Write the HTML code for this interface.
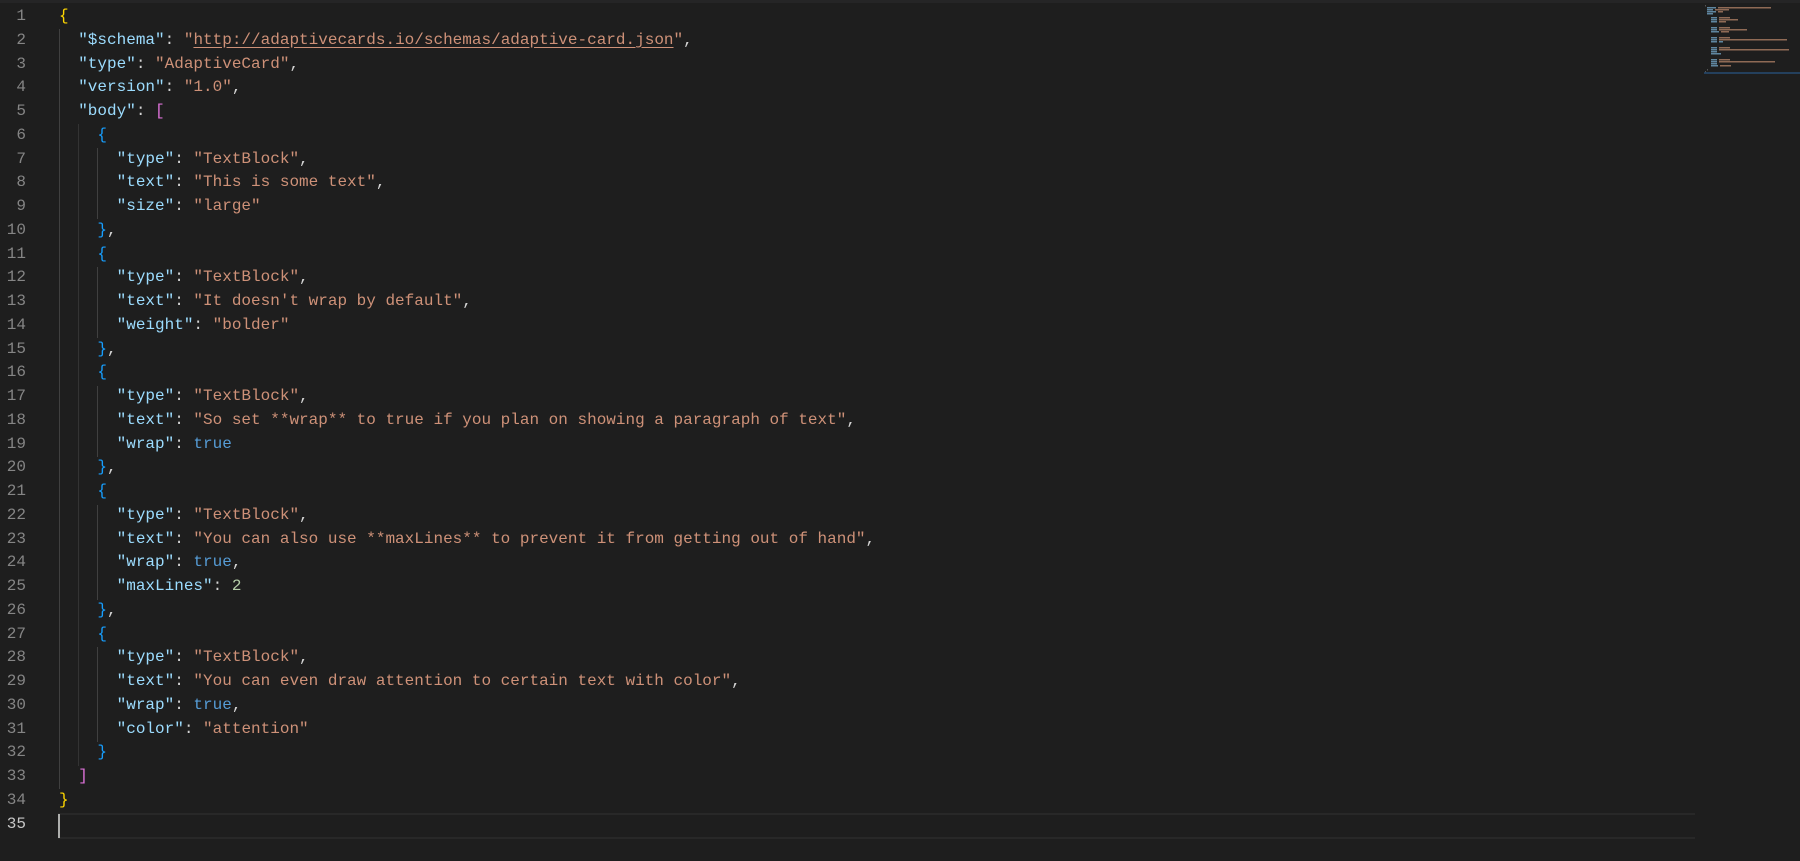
<!DOCTYPE html>
<html><head><meta charset="utf-8"><style>
html,body{margin:0;padding:0;background:#1e1e1e;width:1800px;height:861px;overflow:hidden}
.top{position:absolute;left:0;top:0;width:1800px;height:3px;background:#252526}
.code{position:absolute;left:0;top:5px;font-family:"Liberation Mono",monospace;font-size:16px}
.l{height:23.76px;line-height:23.76px;white-space:pre;position:relative}
.n{position:absolute;left:0;width:26px;text-align:right;color:#858585}
.t{position:absolute;left:59px;color:#d4d4d4}
.k{color:#9cdcfe}.s{color:#ce9178}.b{color:#569cd6}.num{color:#b5cea8}
.y{color:#ffd700}.p{color:#da70d6}.bl{color:#179fff}
.u{text-decoration:underline;text-underline-offset:3px}
.g{position:absolute;width:1px;background:#404040}
.cur{position:absolute;left:58px;top:813px;width:1637px;height:22px;border-top:2px solid #282828;border-bottom:2px solid #282828}
.caret{position:absolute;left:58px;top:814px;width:2px;height:24px;background:#aeafad}
.mm{position:absolute;left:1704px;top:72px;width:96px;height:2px;background:#264f78;opacity:.7}
</style></head><body>
<div class="top"></div>
<div class="cur"></div><div class="caret"></div>
<div class="g" style="left:59px;top:29px;height:760px"></div>
<div class="g" style="left:78px;top:124px;height:642px;background:#333"></div>
<div class="g" style="left:97px;top:148px;height:71px"></div>
<div class="g" style="left:97px;top:267px;height:71px"></div>
<div class="g" style="left:97px;top:386px;height:71px"></div>
<div class="g" style="left:97px;top:505px;height:95px"></div>
<div class="g" style="left:97px;top:647px;height:95px"></div>
<svg style="position:absolute;left:1705px;top:5px" width="95" height="70">
<g fill="#5f86a0">
<rect x="2" y="2" width="9" height="1.5"/><rect x="2" y="4" width="6" height="1.5"/><rect x="2" y="6" width="9" height="1.5"/><rect x="2" y="8" width="6" height="1.5"/>
<rect x="6" y="12" width="6" height="1.5"/><rect x="6" y="14" width="6" height="1.5"/><rect x="6" y="16" width="6" height="1.5"/>
<rect x="6" y="22" width="6" height="1.5"/><rect x="6" y="24" width="6" height="1.5"/><rect x="6" y="26" width="8" height="1.5"/>
<rect x="6" y="32" width="6" height="1.5"/><rect x="6" y="34" width="6" height="1.5"/><rect x="6" y="36" width="6" height="1.5"/><rect x="14" y="36" width="4" height="1.5"/>
<rect x="6" y="42" width="6" height="1.5"/><rect x="6" y="44" width="6" height="1.5"/><rect x="6" y="46" width="6" height="1.5"/><rect x="6" y="48" width="10" height="1.5"/>
<rect x="6" y="54" width="6" height="1.5"/><rect x="6" y="56" width="6" height="1.5"/><rect x="6" y="58" width="6" height="1.5"/><rect x="6" y="60" width="7" height="1.5"/>
</g>
<g fill="#8f6a55">
<rect x="13" y="2" width="53" height="1.5"/><rect x="10" y="4" width="14" height="1.5"/><rect x="13" y="6" width="5" height="1.5"/>
<rect x="14" y="12" width="11" height="1.5"/><rect x="14" y="14" width="19" height="1.5"/><rect x="14" y="16" width="7" height="1.5"/>
<rect x="14" y="22" width="11" height="1.5"/><rect x="14" y="24" width="28" height="1.5"/><rect x="16" y="26" width="8" height="1.5"/>
<rect x="14" y="32" width="11" height="1.5"/><rect x="14" y="34" width="68" height="1.5"/>
<rect x="14" y="42" width="11" height="1.5"/><rect x="14" y="44" width="70" height="1.5"/>
<rect x="14" y="54" width="11" height="1.5"/><rect x="14" y="56" width="56" height="1.5"/><rect x="15" y="60" width="11" height="1.5"/>
</g>
<g fill="#555"><rect x="0" y="0" width="1" height="1.5"/><rect x="0" y="66" width="1" height="1.5"/><rect x="2" y="64" width="1" height="1.5"/></g>
</svg>
<div class="mm"></div>
<div class="code">
<div class="l"><span class="n">1</span><span class="t"><span class="y">{</span></span></div>
<div class="l"><span class="n">2</span><span class="t">  <span class="k">"$schema"</span>: <span class="s">"<span class="u">http://adaptivecards.io/schemas/adaptive-card.json</span>"</span>,</span></div>
<div class="l"><span class="n">3</span><span class="t">  <span class="k">"type"</span>: <span class="s">"AdaptiveCard"</span>,</span></div>
<div class="l"><span class="n">4</span><span class="t">  <span class="k">"version"</span>: <span class="s">"1.0"</span>,</span></div>
<div class="l"><span class="n">5</span><span class="t">  <span class="k">"body"</span>: <span class="p">[</span></span></div>
<div class="l"><span class="n">6</span><span class="t">    <span class="bl">{</span></span></div>
<div class="l"><span class="n">7</span><span class="t">      <span class="k">"type"</span>: <span class="s">"TextBlock"</span>,</span></div>
<div class="l"><span class="n">8</span><span class="t">      <span class="k">"text"</span>: <span class="s">"This is some text"</span>,</span></div>
<div class="l"><span class="n">9</span><span class="t">      <span class="k">"size"</span>: <span class="s">"large"</span></span></div>
<div class="l"><span class="n">10</span><span class="t">    <span class="bl">}</span>,</span></div>
<div class="l"><span class="n">11</span><span class="t">    <span class="bl">{</span></span></div>
<div class="l"><span class="n">12</span><span class="t">      <span class="k">"type"</span>: <span class="s">"TextBlock"</span>,</span></div>
<div class="l"><span class="n">13</span><span class="t">      <span class="k">"text"</span>: <span class="s">"It doesn't wrap by default"</span>,</span></div>
<div class="l"><span class="n">14</span><span class="t">      <span class="k">"weight"</span>: <span class="s">"bolder"</span></span></div>
<div class="l"><span class="n">15</span><span class="t">    <span class="bl">}</span>,</span></div>
<div class="l"><span class="n">16</span><span class="t">    <span class="bl">{</span></span></div>
<div class="l"><span class="n">17</span><span class="t">      <span class="k">"type"</span>: <span class="s">"TextBlock"</span>,</span></div>
<div class="l"><span class="n">18</span><span class="t">      <span class="k">"text"</span>: <span class="s">"So set **wrap** to true if you plan on showing a paragraph of text"</span>,</span></div>
<div class="l"><span class="n">19</span><span class="t">      <span class="k">"wrap"</span>: <span class="b">true</span></span></div>
<div class="l"><span class="n">20</span><span class="t">    <span class="bl">}</span>,</span></div>
<div class="l"><span class="n">21</span><span class="t">    <span class="bl">{</span></span></div>
<div class="l"><span class="n">22</span><span class="t">      <span class="k">"type"</span>: <span class="s">"TextBlock"</span>,</span></div>
<div class="l"><span class="n">23</span><span class="t">      <span class="k">"text"</span>: <span class="s">"You can also use **maxLines** to prevent it from getting out of hand"</span>,</span></div>
<div class="l"><span class="n">24</span><span class="t">      <span class="k">"wrap"</span>: <span class="b">true</span>,</span></div>
<div class="l"><span class="n">25</span><span class="t">      <span class="k">"maxLines"</span>: <span class="num">2</span></span></div>
<div class="l"><span class="n">26</span><span class="t">    <span class="bl">}</span>,</span></div>
<div class="l"><span class="n">27</span><span class="t">    <span class="bl">{</span></span></div>
<div class="l"><span class="n">28</span><span class="t">      <span class="k">"type"</span>: <span class="s">"TextBlock"</span>,</span></div>
<div class="l"><span class="n">29</span><span class="t">      <span class="k">"text"</span>: <span class="s">"You can even draw attention to certain text with color"</span>,</span></div>
<div class="l"><span class="n">30</span><span class="t">      <span class="k">"wrap"</span>: <span class="b">true</span>,</span></div>
<div class="l"><span class="n">31</span><span class="t">      <span class="k">"color"</span>: <span class="s">"attention"</span></span></div>
<div class="l"><span class="n">32</span><span class="t">    <span class="bl">}</span></span></div>
<div class="l"><span class="n">33</span><span class="t">  <span class="p">]</span></span></div>
<div class="l"><span class="n">34</span><span class="t"><span class="y">}</span></span></div>
<div class="l"><span class="n" style="color:#c6c6c6">35</span><span class="t"></span></div>
</div>
</body></html>
